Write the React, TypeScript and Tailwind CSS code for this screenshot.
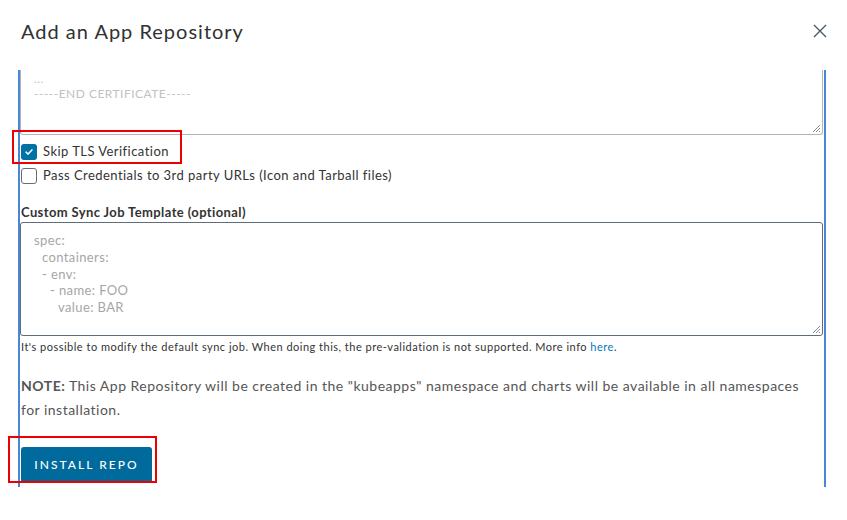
import React from 'react';

const ResizeGrip: React.FC = () => (
  <svg className="absolute right-[1px] bottom-[1px] w-[9px] h-[9px]" viewBox="0 0 9 9">
    <path d="M8 1 L1 8 M8 4 L4 8 M8 7 L7 8" stroke="#8a8a8a" strokeWidth="1" />
  </svg>
);

const Checkbox: React.FC<{ checked?: boolean; label: string }> = ({ checked, label }) => (
  <label className="flex items-center h-[16px]">
    {checked ? (
      <span className="w-[16px] h-[16px] rounded-[3px] bg-[#0072a3] flex items-center justify-center">
        <svg viewBox="0 0 12 12" className="w-[10px] h-[10px]">
          <path d="M2.5 6.2 L5 8.5 L9.5 3.5" stroke="#fff" strokeWidth="1.8" fill="none" strokeLinecap="round" strokeLinejoin="round" />
        </svg>
      </span>
    ) : (
      <span className="w-[16px] h-[16px] rounded-[3px] border border-[#6b6b6b] bg-white" />
    )}
    <span className="ml-[6px] text-[13px] tracking-[0.035em] text-[#333]">{label}</span>
  </label>
);

const App: React.FC = () => {
  return (
    <div className="relative w-[847px] h-[520px] bg-white overflow-hidden" style={{ fontFamily: 'Lato, "Noto Sans", sans-serif' }}>
      <header className="h-[70px] flex items-start justify-between pl-[21px] pr-[20px] pt-[17px]">
        <h1 className="text-[20px] leading-[28px] text-[#313131] tracking-[0.05em]">Add an App Repository</h1>
        <button className="mt-[7px] w-[14px] h-[14px]" aria-label="Close">
          <svg viewBox="0 0 14 14" className="w-[14px] h-[14px]">
            <path d="M1 1 L13 13 M13 1 L1 13" stroke="#4a5a66" strokeWidth="1.4" />
          </svg>
        </button>
      </header>

      <div className="ml-[18px] w-[808px] h-[417px] border-x-2 border-[#4a86d8] pr-[1px] overflow-hidden">
        <div className="relative h-[65px] border-x border-b border-[#b5b5b5] rounded-b-[3px] pl-[13px] pt-[1px] text-[12px] leading-[15px] tracking-[0.04em] text-[#c2c2c2]">
          <div>...</div>
          <div>-----END CERTIFICATE-----</div>
          <ResizeGrip />
        </div>

        <div className="mt-[9px] ml-[1px] flex flex-col gap-[8px]">
          <Checkbox checked label="Skip TLS Verification" />
          <Checkbox label="Pass Credentials to 3rd party URLs (Icon and Tarball files)" />
        </div>

        <div className="mt-[20px] ml-[1px] text-[13px] leading-[16px] font-bold tracking-[0.03em] text-[#333]">Custom Sync Job Template (optional)</div>

        <div className="relative mt-[2px] h-[114px] border border-[#5d6d7a] rounded-[3px] pl-[13px] pt-[9px] text-[13px] leading-[16.75px] tracking-[0.03em] text-[#a6a6a6]">
          <div>spec:</div>
          <div className="pl-[8px]">containers:</div>
          <div className="pl-[8px]">- env:</div>
          <div className="pl-[16px]">- name: FOO</div>
          <div className="pl-[24px]">value: BAR</div>
          <ResizeGrip />
        </div>

        <p className="mt-[4px] ml-[1px] text-[11px] leading-[14px] tracking-[0.045em] text-[#333]">
          It's possible to modify the default sync job. When doing this, the pre-validation is not supported. More info{' '}
          <a className="text-[#0079b8]">here</a>.
        </p>

        <p className="mt-[20px] ml-[1px] pr-[8px] text-[14px] leading-[24px] tracking-[0.035em] text-[#565656]">
          <span className="font-bold">NOTE:</span> This App Repository will be created in the "kubeapps" namespace and charts will be available in all namespaces for installation.
        </p>

        <button className="mt-[25px] ml-[1px] h-[36px] w-[131px] rounded-[3px] bg-[#006a9c] text-white text-[12px] font-medium tracking-[0.17em]">
          INSTALL REPO
        </button>
      </div>

      <div className="absolute left-[12px] top-[130px] w-[170px] h-[34px] border-2 border-[#ee0000]" />
      <div className="absolute left-[8px] top-[436px] w-[149px] h-[47px] border-2 border-[#ee0000]" />
    </div>
  );
};

export default App;
